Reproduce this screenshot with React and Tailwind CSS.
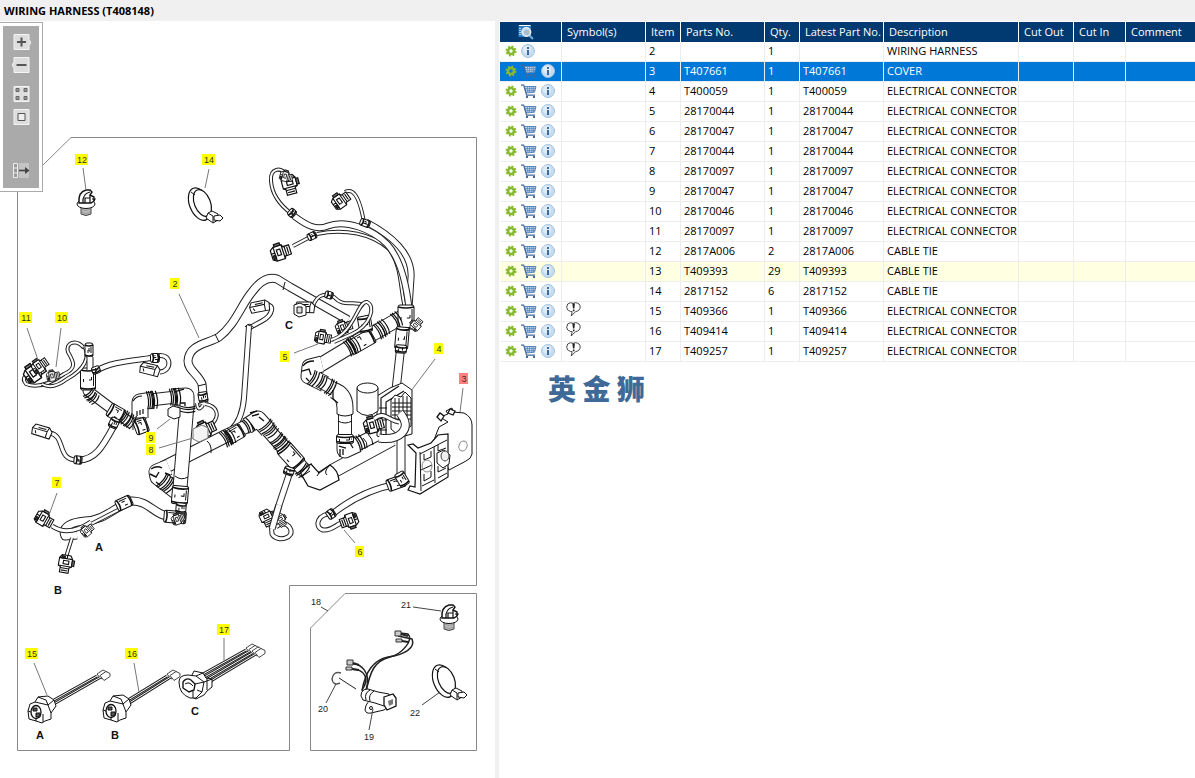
import { useState } from 'react';
import clsx from 'clsx';

const EC = 'ELECTRICAL CONNECTOR';

const parts = [
  { item: 2, partNo: '', qty: 1, description: 'WIRING HARNESS' },
  { item: 3, partNo: 'T407661', qty: 1, description: 'COVER' },
  { item: 4, partNo: 'T400059', qty: 1, description: EC },
  { item: 5, partNo: '28170044', qty: 1, description: EC },
  { item: 6, partNo: '28170047', qty: 1, description: EC },
  { item: 7, partNo: '28170044', qty: 1, description: EC },
  { item: 8, partNo: '28170097', qty: 1, description: EC },
  { item: 9, partNo: '28170047', qty: 1, description: EC },
  { item: 10, partNo: '28170046', qty: 1, description: EC },
  { item: 11, partNo: '28170097', qty: 1, description: EC },
  { item: 12, partNo: '2817A006', qty: 2, description: 'CABLE TIE' },
  { item: 13, partNo: 'T409393', qty: 29, description: 'CABLE TIE', highlight: true },
  { item: 14, partNo: '2817152', qty: 6, description: 'CABLE TIE' },
  { item: 15, partNo: 'T409366', qty: 1, description: EC, note: true },
  { item: 16, partNo: 'T409414', qty: 1, description: EC, note: true },
  { item: 17, partNo: 'T409257', qty: 1, description: EC, note: true },
];

const columns = [
  { label: 'Symbol(s)', width: 'w-[84px]' },
  { label: 'Item', width: 'w-[35px]' },
  { label: 'Parts No.', width: 'w-[84px]' },
  { label: 'Qty.', width: 'w-[35px]' },
  { label: 'Latest Part No.', width: 'w-[84px]' },
  { label: 'Description', width: 'w-[135px]' },
  { label: 'Cut Out', width: 'w-[55px]' },
  { label: 'Cut In', width: 'w-[52px]' },
  { label: 'Comment', width: '' },
];

// x, y is the centre of the label, line is the leader
const callouts = [
  { n: 12, x: 82, y: 160, line: 'M83 168 L86 190' },
  { n: 14, x: 209, y: 160, line: 'M209 169 L205 188' },
  { n: 2, x: 175, y: 284, line: 'M179 294 L199 338' },
  { n: 11, x: 26, y: 318, line: 'M27 328 L38 360' },
  { n: 10, x: 62, y: 318, line: 'M61 328 L56 367' },
  { n: 5, x: 285, y: 357, line: 'M294 353 L318 344' },
  { n: 4, x: 439, y: 349, line: 'M435 359 L411 391' },
  { n: 3, x: 464, y: 379, line: 'M463 388 L460 412' },
  { n: 9, x: 151, y: 438, line: 'M157 429 L170 419' },
  { n: 8, x: 151, y: 450, line: 'M159 448 L193 438' },
  { n: 7, x: 57, y: 483, line: 'M57 493 L49 515' },
  { n: 6, x: 360, y: 552, line: 'M355 543 L344 530' },
  { n: 15, x: 32, y: 654, line: 'M34 663 L47 695' },
  { n: 16, x: 132, y: 654, line: 'M134 663 L139 692' },
  { n: 17, x: 224, y: 630, line: 'M224 638 V662' },
];

const kitLabels = [
  { n: 18, x: 316, y: 602, line: 'M321 607 L328 611' },
  { n: 21, x: 406, y: 605, line: 'M413 607 L441 611' },
  { n: 20, x: 323, y: 709, line: 'M326 703 L336 684' },
  { n: 19, x: 369, y: 737, line: 'M369 730 L373 709' },
  { n: 22, x: 415, y: 713, line: 'M422 705 L440 692' },
];

function GearIcon() {
  return (
    <svg viewBox="0 0 12 12" className="size-3">
      <circle cx="6" cy="6" r="4.6" fill="none" stroke="#86b92f" strokeWidth="1.8" strokeDasharray="1.9 1.7" />
      <circle cx="6" cy="6" r="3" fill="none" stroke="#86b92f" strokeWidth="2.6" />
    </svg>
  );
}

function CartIcon() {
  return (
    <svg viewBox="0 0 16 15" className="h-[15px] w-4" fill="none" stroke="#5a86b8">
      <path d="M3.4 2.5H15L13.5 8.2L5 9Z" fill="#c9dbee" />
      <path d="M4 4.6H14.5M4.5 6.7H14M6.3 2.5L7 8.8M8.6 2.5V8.6M10.9 2.5V8.5M13 2.5L12.3 8.4" strokeWidth=".8" />
      <path d="M0 1.2H2.7L5.6 11.2H14" stroke="#42699c" strokeWidth="1.2" />
      <path d="M5 12H7V14H5ZM12 12H14V14H12Z" fill="#42699c" stroke="none" />
    </svg>
  );
}

function InfoIcon() {
  return (
    <svg viewBox="0 0 14 14" className="size-3.5">
      <circle cx="7" cy="7" r="6.5" fill="#c6dcf0" stroke="#a3c3e0" />
      <circle cx="6" cy="5.500" r="4" fill="#dfecf8" />
      <path d="M6 3H8V5H6ZM6 6H8V11H6Z" fill="#3f6a9e" />
    </svg>
  );
}

function NoteIcon() {
  return (
    <svg viewBox="0 0 15 15" className="ml-px h-[15px] w-[15px]">
      <path d="M4.5 9.5Q.7 8.5.7 5.2Q.8 1 4.5.7L7 1.4L9.500.7Q14.2 1.2 14.2 5Q14 9 9.6 9.6L5.2 14L6.2 9.6Z" fill="#fff" stroke="#333" strokeWidth=".9" />
      <path d="M6.300 1.500H8.900L8.4 6.6H7ZM6.900 7.600H8.500V9.200H6.900Z" fill="#222" />
    </svg>
  );
}

function SearchListIcon() {
  return (
    <svg viewBox="0 0 16 16" className="size-4">
      <path d="M.5 1H13V13H.5Z" fill="#2d7fc4" />
      <path d="M1 1.5H12.5" stroke="#fff" />
      <path d="M1 4.5H3M1 6.5H3M1 8.5H3M1 10.5H3" stroke="#a8d4f5" />
      <path d="M11.5 11.5L15 15" stroke="#6fa9d8" strokeWidth="2.2" />
      <circle cx="8.3" cy="8" r="4.4" fill="#c6dbe8" stroke="#e8eef2" strokeWidth="1.4" />
      <circle cx="8.8" cy="8.4" r="2.6" fill="#a4bccb" />
    </svg>
  );
}

function ToolButton({ label, children, className }) {
  return (
    <button type="button" aria-label={label} className={clsx('block h-[17px] w-[19px]', className)}>
      <svg viewBox="0 0 19 17" className="h-[17px] w-[19px]">
        {children}
      </svg>
    </button>
  );
}

function Toolbar() {
  return (
    <div className="absolute top-[1px] left-0 border border-l-0 border-[#aaa] bg-white p-[3px]">
      <div className="flex h-[162px] w-9 flex-col items-center bg-[#aaa] pt-2">
        <ToolButton label="Zoom in">
          <path d="M2 .5H17V5.5L19 8.5L17 11.5V15.5H2Z" fill="#ddd" stroke="#f4f4f4" />
          <path d="M5 8H14M9.5 3.5V12.5" stroke="#555" strokeWidth="2" />
        </ToolButton>
        <ToolButton label="Zoom out" className="mt-1.5">
          <path d="M2 .5H17V15.5H2V11L0 8L2 5Z" fill="#ddd" stroke="#f4f4f4" />
          <path d="M4.5 8H14.5" stroke="#555" strokeWidth="2" />
        </ToolButton>
        <ToolButton label="Fit to window" className="mt-3">
          <path d="M2 .5H17V15.5H2Z" fill="#ddd" stroke="#f4f4f4" />
          <path d="M4 2.5H7V5.5H4ZM12 2.5H15V5.5H12ZM4 10.5H7V13.5H4ZM12 10.5H15V13.5H12Z" fill="#999" stroke="#666" />
        </ToolButton>
        <ToolButton label="Actual size" className="mt-1.5">
          <path d="M2 .5H17V15.5H2Z" fill="#ddd" stroke="#f4f4f4" />
          <path d="M6 4.5H13V11.5H6Z" fill="#eee" stroke="#555" />
        </ToolButton>
        <ToolButton label="Show part list" className="mt-9">
          <path d="M1.5 1.5H5.5V15.5H1.5ZM1.5 6H5.5M1.5 11H5.5" fill="#999" stroke="#eee" />
          <path d="M7 1H17V16H7Z" fill="#c4c4c4" />
          <path d="M7 8.5H15" stroke="#444" strokeWidth="1.6" />
          <path d="M13 5L17.5 8.5L13 12Z" fill="#444" />
        </ToolButton>
      </div>
    </div>
  );
}

function Tube({ d, w }) {
  return (
    <g fill="none" strokeLinejoin="round">
      <path d={d} stroke="#222" strokeWidth={w} />
      <path d={d} stroke="#fff" strokeWidth={w - 2} />
    </g>
  );
}

// ribbed sleeve that sits across a tube, a is the direction of the tube
function Joint({ x, y, a = 0, w = 16, l = 14 }) {
  const h = w / 2;
  const k = l / 2;
  return (
    <g transform={`translate(${x} ${y}) rotate(${a})`} fill="#fff" stroke="#111">
      <rect x={-k} y={-h} width={l} height={w} rx="2" />
      <path d={`M${-k + 2} ${-h}Q${-k + 4} 0 ${-k + 2} ${h}M${k - 2} ${-h}Q${k} 0 ${k - 2} ${h}`} fill="none" strokeWidth="1.6" />
      <path d={`M${-k + 4} ${-h + 2}H${k - 4}M-2 ${-h + 4}L1 ${-h + 4}V-1M0 ${h - 3}H3`} fill="none" />
    </g>
  );
}

function Band({ x, y, a = 0, w = 14 }) {
  return (
    <g transform={`translate(${x} ${y}) rotate(${a})`} fill="none" stroke="#111">
      <path d={`M-2 ${-w / 2}Q1 0 -2 ${w / 2}M0 ${-w / 2}Q3 0 0 ${w / 2}M3 ${-w / 2}Q6 0 3 ${w / 2}`} strokeWidth="1.2" />
    </g>
  );
}

function Plug({ x, y, a = 0, s = 1 }) {
  return (
    <g transform={`translate(${x} ${y}) rotate(${a}) scale(${s})`} fill="#fff" stroke="#111">
      <path d="M-9 -4L-6 -6H1L2 -4H7V4H2L1 6H-6L-9 4Z" />
      <path d="M-6 -6V6M1 -6V6M-9 -1H-6M-4 -3H-1V2H-4ZM3 -4V4M5 -3V3" fill="none" />
      <path d="M-5 -8H0V-6H-5Z" fill="#777" />
      <path d="M-8 1H-6V4H-8Z" fill="#333" />
    </g>
  );
}

function BoxPlug({ x, y, a = 0 }) {
  return (
    <g transform={`translate(${x} ${y}) rotate(${a})`} fill="#fff" stroke="#111">
      <path d="M-10 -3L-7 -7L7 -5L10 -1L8 6L-10 3Z" />
      <path d="M-10 -3L5 -1L7 -5M5 -1L4 5M-4 -4L4 -3M-7 -1L-6 2" fill="none" />
    </g>
  );
}

function FirTreeTie({ x, y }) {
  return (
    <g transform={`translate(${x} ${y})`} fill="#fff" stroke="#111">
      <path d="M-5 8V16Q0 19 5 16V8Z" fill="#bbb" stroke="#444" />
      <path d="M-5 11Q0 14 5 11M-5 14Q0 17 5 14" fill="none" stroke="#888" strokeWidth=".7" />
      <ellipse cx="0" cy="6" rx="9" ry="4.5" />
      <path d="M-7 5Q-8 -6 0 -8H4L6 -6L4 -3L8 -1V3L5 5Z" strokeWidth="1.4" />
      <path d="M-3 5Q-4 -4 4 -6M-1 5V0H4V5M4 -3V0M6 1H9L8 3" fill="none" strokeWidth="1.2" />
    </g>
  );
}

function CableTie({ x, y }) {
  return (
    <g transform={`translate(${x} ${y})`} fill="none" stroke="#111">
      <ellipse cx="0" cy="-1" rx="10" ry="17" transform="rotate(-22)" fill="#fff" strokeWidth="1.2" />
      <ellipse cx="3" cy="-1" rx="8" ry="14" transform="rotate(-22)" fill="#fff" strokeWidth="1.2" />
      <path d="M-9 -13L-5 -10" />
      <path d="M8 8L12 6L18 9V15L13 18L6 13Z" fill="#fff" />
      <path d="M14 11L20 10L23 13L20 16L14 15ZM8 8L13 11V18" fill="#fff" />
    </g>
  );
}

function LeadConnector({ x, y, s = 1 }) {
  return (
    <g transform={`translate(${x} ${y}) scale(${s})`} fill="#fff" stroke="#111">
      <path d="M-12 0L-10 -7L-5 -9L-2 -14L8 -15L14 -11L16 -5L11 2V8L5 10L2 12L-4 10L-11 8Z" />
      <path d="M-5 -9L8 -6L11 2M8 -6L14 -11M-2 -14L6 -11L8 -6M-12 0L-4 3L-4 10M3 3V11" fill="none" />
      <ellipse cx="-4" cy="1" rx="5" ry="6.5" strokeWidth="1.3" />
      <path d="M-7 -3H-3V0H-7ZM-4 2H0V6H-4Z" fill="#555" />
    </g>
  );
}

// three-way housing C has one wide opening instead of pin slots
function WideConnector({ x, y }) {
  return (
    <g transform={`translate(${x} ${y})`} fill="#fff" stroke="#111">
      <path d="M-2 -11L0 -15L9 -13L12 -8L18 -7V1L13 5L10 9L2 13L-6 9L-4 -6Z" />
      <path d="M-15 -4Q-15 -11 -6 -11L2 -10L10 -4L8 6L2 12L-4 12Q-15 8 -15 -4Z" />
      <path d="M-11 -4Q-8 -9 -3 -6L1 -2L0 4L-5 6L-11 2Z" strokeWidth="1.4" />
      <path d="M-9 -2Q-5 -5 -1 0M2 -10L9 -13M10 -4L18 -7M1 -2L10 -4M-1 5V12M3 4L8 6M13 -8V4" fill="none" />
    </g>
  );
}

function Leads({ x1, y1, x2, y2, count }) {
  return Array.from({ length: count }, (_, i) => {
    const o = i * 3;
    return (
      <g key={i}>
        <Tube d={`M${x1 + o / 2} ${y1 + o} L${x2 + o} ${y2 + o / 2}`} w={3} />
        <path d={`M${x2 + o} ${y2 + o / 2 - 2}l6 -4l4 2l0 3l-6 4z`} fill="#fff" stroke="#333" strokeWidth=".9" />
      </g>
    );
  });
}

function Harness() {
  return (
    <g>
      {/* upper right branches */}
      <Tube w={4} d="M287 176 C281 166 270 168 271 181 C272 196 281 206 292 214" />
      <Tube w={4} d="M345 192 C356 186 361 206 364 222" />
      <Tube w={4} d="M293 246 L312 236" />
      <Tube w={4} d="M317 234 C345 228 372 234 389 249 C402 266 400 288 405 308" />
      <Tube w={7} d="M366 222 C391 235 413 254 411 278 L409 308" />
      <Tube w={7} d="M294 216 C306 225 316 231 328 226 C345 219 372 229 387 244 C400 258 406 282 409 308" />
      <Joint x={292} y={213} a={40} w={8} l={7} />
      <Joint x={365} y={223} a={20} w={7} l={10} />
      <Joint x={312} y={236} a={-25} w={7} l={9} />
      <Plug x={290} y={186} a={75} s={1.2} />
      <Plug x={287} y={177} a={15} s={0.8} />
      <Plug x={342} y={200} a={-35} s={1.1} />
      <Plug x={282} y={252} a={-18} s={1.2} />

      {/* main cable, item 2 */}
      <Tube w={9} d="M204 404 L202 384 C198 374 188 370 188 361 C189 344 208 344 219 337 C235 325 241 305 252 292 C260 281 268 276 277 279 L290 287 L348 320" />
      <path d="M215 334L219 342M285 282L283 290M198 386L206 384" stroke="#111" />
      <Joint x={203} y={397} a={80} w={9} l={10} />
      <Tube w={5} d="M266 305 C275 304 273 315 262 321 L249 328" />
      <Tube w={6} d="M249 326 L244 398 Q242 420 231 430" />
      <path d="M245 327Q249 321 254 328" fill="none" stroke="#111" />
      <BoxPlug x={260} y={307} a={-20} />
      <Tube w={4} d="M313 306 C318 292 327 294 334 297 C344 308 352 300 364 305" />
      <BoxPlug x={305} y={308} a={-8} />
      <path d="M294 305L300 303L306 306V315L299 317L294 314Z" fill="#fff" stroke="#111" />
      <path d="M297 307H302V313H297Z" fill="#ddd" stroke="#111" />
      <Joint x={329} y={295} a={15} w={7} l={8} />

      {/* right trunk */}
      <Tube w={9} d="M401 345 L396 390 M401 430 V478" />
      <Tube w={15} d="M404 316 L355 344 L312 370" />
      <Tube w={17} d="M322 364 L310 367 L309 376 L325 384" />
      <Tube w={14} d="M322 382 L339 392 Q346 398 345 412 V446" />
      <Tube w={17} d="M333 390 Q345 394 345 408 V414" />
      <path d="M303 366Q306 361 314 361M302 371L309 369L311 375M333 390V399L338 403M306 378L309 381" fill="none" stroke="#111" strokeWidth="1.3" />
      <Band x={313} y={378} a={30} w={16} />
      <Band x={321} y={382} a={30} />
      <Band x={330} y={387} a={30} w={17} />
      <path d="M337 414Q345 418 353 414M338 421Q345 425 352 421" fill="none" stroke="#111" />
      <Joint x={361} y={341} a={-30} w={17} l={26} />
      <Joint x={365} y={324} a={80} w={13} l={16} />
      <Band x={383} y={328} a={-30} w={17} />
      <Band x={379} y={331} a={-30} w={17} />
      <Band x={354} y={345} a={-30} w={17} />
      <Band x={349} y={348} a={-30} w={17} />
      <Joint x={406} y={317} a={90} w={16} l={24} />
      <Band x={396} y={320} a={-30} w={16} />
      <Joint x={402} y={338} a={95} w={13} l={22} />
      <Joint x={401} y={349} a={95} w={11} l={8} />
      <Plug x={417} y={324} a={-50} s={0.8} />
      <Plug x={345} y={327} a={-20} />
      <Plug x={324} y={338} a={10} />
      <Tube w={4} d="M331 340 C354 334 358 300 367 302 C376 306 371 325 352 334 L334 342" />

      {/* lower trunk */}
      <Tube w={15} d="M392 439 L335 470 L318 481 L302 468 L286 450 L260 421" />
      <Tube w={14} d="M350 448 L380 433" />
      <Tube w={17} d="M345 438 V450 L358 444" />
      <path d="M340 449V457M343 449V455M350 443L353 448M339 446L346 448" stroke="#111" strokeWidth="1.3" />
      <Joint x={345} y={439} a={90} w={17} l={9} />
      <Band x={359} y={443} a={-25} w={16} />
      <path d="M363 438Q368 442 367 448M303 471Q309 464 312 464M368 434Q373 439 373 445" fill="none" stroke="#111" />
      <path d="M300 472L311 464L319 473L330 465Q338 470 339 480L320 490L308 486Z" fill="#fff" stroke="#111" strokeWidth="1.3" />
      <path d="M319 473L317 476M330 465Q323 472 327 475M301 477L310 471" fill="none" stroke="#111" />
      <Joint x={291} y={456} a={48} w={17} l={24} />
      <Band x={302} y={470} a={45} w={16} />
      <Band x={281} y={444} a={48} w={17} />
      <Band x={277} y={439} a={48} w={16} />
      <Band x={271} y={431} a={48} w={15} />
      <Tube w={14} d="M258 421 L226 436 L163 468" />
      <Tube w={17} d="M247 426 L258 419 L268 430" />
      <path d="M250 413L257 411M252 416L259 414M259 417L264 421M251 424L255 430" fill="none" stroke="#111" strokeWidth="1.400" />
      <Band x={266} y={426} a={48} w={17} />
      <Band x={247} y={426} a={-30} w={15} />
      <Joint x={235} y={434} a={-30} w={14} l={17} />
      <Band x={229} y={437} a={-30} w={17} />
      <Band x={225} y={439} a={-30} w={17} />
      <path d="M207 441Q212 445 211 453" fill="none" stroke="#111" />
      <Tube w={17} d="M169 467 L157 472 L158 477 L180 494" />
      <path d="M151 469Q157 465 162 468M150 474L156 477L159 472M156 482L160 485M165 473L170 475" fill="none" stroke="#111" strokeWidth="1.400" />
      <Band x={163} y={481} a={40} w={17} />
      <Band x={169} y={485} a={40} w={17} />
      <Tube w={7} d="M290 472 L272 526" />
      <Tube w={5} d="M271 522 L272 534 C277 543 296 538 290 528 C286 521 279 524 276 527" />
      <Joint x={289} y={471} a={110} w={10} l={8} />
      <Plug x={267} y={519} a={65} />
      <Plug x={281} y={521} a={60} s={0.8} />
      <Tube w={7} d="M279 505 L272 529" />

      {/* lower right branch, item 6 */}
      <Tube w={7} d="M398 484 C373 488 352 498 331 515" />
      <Tube w={5} d="M334 514 C318 512 313 527 323 530 C331 531 336 525 341 523" />
      <Joint x={331} y={514} a={-35} w={9} l={8} />
      <Joint x={396} y={483} a={-20} w={12} l={18} />
      <Joint x={402} y={479} a={60} w={10} l={14} />
      <Plug x={348} y={521} a={160} s={1.1} />

      {/* item 4 with filter can */}
      <path d="M377 396L390 388L402 383L412 390V434L390 440L377 436Z" fill="#fff" stroke="#111" />
      <path d="M381 437V398L399 386M386 437V402L404 391M379 408H387M379 420H387M379 430H387" fill="none" stroke="#111" strokeWidth="1.2" />
      <path d="M391 400L395 395L401 397L405 392L411 398V426L398 435L391 429Z" fill="#fff" stroke="#111" />
      <path d="M392 403H411M392 407H411M392 411H411M392 415H411M392 419H411M395 398V421M399 398V421M403 396V421M407 396V421" stroke="#111" />
      <path d="M357 388V411Q367 420 378 411V388" fill="#fff" stroke="#111" />
      <ellipse cx="367.5" cy="388" rx="10.5" ry="5" fill="#fff" stroke="#111" />
      <Plug x={375} y={425} a={-15} s={1.2} />
      <Tube w={5} d="M374 419 C384 410 389 421 399 422" />
      <Tube w={9} d="M400 413 C414 430 398 441 379 438" />

      {/* cover, item 3 */}
      <path d="M439 427L448 422L440 417L448 414L446 411L452 408L453 412L464 413Q472 417 472 425V454Q471 459 466 461L449 470L434 440Z" fill="#fff" stroke="#111" />
      <path d="M437 417L440 413L444 416L441 421ZM448 413L450 409L455 411L453 415Z" fill="#fff" stroke="#111" strokeWidth="1.3" />
      <ellipse cx="463" cy="446" rx="4" ry="5" fill="#fff" stroke="#888" transform="rotate(20 463 446)" />
      <path d="M408 445L413 444L418 448L431 443L438 435L448 434V477L420 494L408 490L410 486L415 487L416 453Z" fill="#fff" stroke="#111" strokeWidth="1.2" />
      <path d="M420 452L421 491M420 454L447 440M421 470L432 465M422 486L434 480M434 447L435 483M438 478L447 473M424 454V460L431 457V451M438 445V451L446 448M424 474V481L431 477V471M438 466V472L446 468" fill="none" stroke="#111" />
      <path d="M437 453L444 450L450 455L449 464L443 468L437 463Z" fill="#fff" stroke="#111" />
      <ellipse cx="445" cy="456" rx="4" ry="5" fill="#eee" stroke="#444" />
      <ellipse cx="427" cy="466" rx="5" ry="6" fill="none" stroke="#888" />

      {/* left trunk */}
      <Tube w={4} d="M205 404 C218 406 220 416 212 424 M203 405 Q198 413 197 403" />
      <Tube w={15} d="M187 404 L180 488" />
      <path d="M175 476Q181 481 188 477" fill="none" stroke="#111" />
      <Plug x={207} y={429} a={-25} s={1.2} />
      <path d="M193 429L202 425L208 428V438L199 442L193 439Z" fill="#f4f4f4" stroke="#777" />
      <Tube w={13} d="M176 397 L150 400 L139 404 V430" />
      <Tube w={11} d="M88 374 V391 L132 424" />
      <Tube w={17} d="M153 400 L140 402 V418" />
      <path d="M137 411V416M140 410V415M143 409V414M132 418H147M133 401Q136 396 142 396" fill="none" stroke="#111" strokeWidth="1.2" />
      <Band x={153} y={400} a={-5} w={18} />
      <Band x={149} y={400} a={-5} w={18} />
      <Tube w={17} d="M172 397 L186 396 V410" />
      <path d="M180 403H185V406M177 391L184 389" fill="none" stroke="#111" strokeWidth="1.3" />
      <Band x={176} y={397} a={-5} w={18} />
      <Band x={172} y={397} a={-5} w={17} />
      <Band x={187} y={408} a={93} w={17} />
      <Joint x={141} y={426} a={-20} w={15} l={13} />
      <Band x={130} y={421} a={30} w={15} />
      <Joint x={116} y={413} a={30} w={14} l={16} />
      <Band x={125} y={418} a={35} w={15} />
      <Joint x={88} y={379} a={90} w={15} l={22} />
      <Band x={89} y={394} a={50} w={12} />
      <Band x={93} y={398} a={40} w={12} />
      <Tube w={4} d="M84 348 C76 338 65 343 68 352 C73 361 78 368 64 374 C50 384 36 388 26 384 C20 377 28 373 35 370" />
      <Tube w={4} d="M84 346 C91 357 84 370 67 379 C58 386 49 388 42 384" />
      <Joint x={89} y={350} a={90} w={8} l={14} />
      <Tube w={7} d="M90 357 V370" />
      <Plug x={36} y={372} a={-35} s={1.3} />
      <Plug x={41} y={365} a={-35} />
      <Plug x={54} y={376} a={-10} s={0.8} />
      <Tube w={6} d="M96 371 C110 362 130 361 151 358" />
      <Tube w={5} d="M156 356 C172 352 173 371 160 372" />
      <Joint x={155} y={358} a={0} w={9} l={9} />
      <Joint x={96} y={370} a={70} w={8} l={7} />
      <BoxPlug x={150} y={370} a={5} />
      <Tube w={7} d="M115 424 C104 444 96 461 77 460" />
      <Tube w={5} d="M80 460 C55 462 67 436 50 433" />
      <Joint x={78} y={460} a={5} w={8} l={8} />
      <Joint x={114} y={423} a={115} w={9} l={10} />
      <BoxPlug x={42} y={432} a={8} />
      <path d="M168 409L173 406L180 408V417L174 419L168 416Z" fill="#fff" stroke="#111" />

      {/* lower left branch, item 7 */}
      <Tube w={9} d="M172 517 C154 516 149 500 131 501 C113 508 105 520 85 521 C73 522 61 526 65 536 L77 535" />
      <Tube w={4} d="M120 509 L89 525 M72 538 L66 557" />
      <Tube w={5} d="M52 526 C65 535 79 530 91 522" />
      <Joint x={124} y={503} a={-25} w={11} l={16} />
      <Joint x={180} y={495} a={95} w={16} l={18} />
      <Joint x={175} y={517} a={5} w={12} l={22} />
      <Joint x={181} y={508} a={95} w={10} l={10} />
      <Plug x={179} y={519} a={-20} s={0.8} />
      <Plug x={45} y={520} a={30} s={1.1} />
      <Plug x={88} y={530} a={-40} s={0.8} />
      <Plug x={65} y={565} a={100} s={1.1} />
    </g>
  );
}

function SensorKit() {
  return (
    <g>
      <g fill="none" stroke="#222" strokeWidth="1.5">
        <path d="M362 691 C365 672 374 660 388 657 C404 655 416 648 412 639 L398 636" />
        <path d="M366 692 C370 672 374 661 390 657 C402 654 414 640 408 634 L400 633" />
        <path d="M362 690 C369 680 367 669 350 669 M366 690 C372 672 360 663 352 664" />
      </g>
      <path d="M395 631H401V636H395ZM396 639H402V642H396ZM347 660H353V665H347ZM346 667H352V670H346Z" fill="#ccc" stroke="#333" />
      <path d="M401 634L408 636M402 641L408 642M353 663L359 665M352 669L359 670" stroke="#222" strokeWidth="2" />
      <path d="M341 673Q333 671 332 679Q333 686 340 683" fill="none" stroke="#555" strokeWidth="1.5" />
      <path d="M339 678L356 689" stroke="#222" />
      <path d="M365 710Q366 701 373 699L383 697L392 704L384 710L371 713Q366 714 365 710Z" fill="#fff" stroke="#111" />
      <path d="M361 696Q361 689 368 689L378 692L389 694L391 700L384 706L375 703L363 700Z" fill="#fff" stroke="#111" />
      <path d="M366 700Q364 693 370 690M370 701Q368 695 374 691" fill="none" stroke="#111" />
      <path d="M384 697L393 694L396 698V706L387 710L384 705Z" fill="#fff" stroke="#111" strokeWidth="1.3" />
      <path d="M388 701L393 699V704L389 706Z" fill="#777" />
      <circle cx="371" cy="708" r="1.5" fill="#fff" stroke="#111" />
      <FirTreeTie x={449} y={613} />
      <CableTie x={444} y={682} />
    </g>
  );
}

function Diagram({ selected, onSelect }) {
  return (
    <svg viewBox="0 21 495 757" className="block w-full font-['Liberation_Sans',sans-serif]" role="img" aria-label="Wiring harness diagram">
      <path d="M42 166L71 137.5H476.5V585.5H289.5V750.5H17.5V190" fill="none" stroke="#888" />
      <path d="M310.5 628L345 593.5H476.5V750.5H310.5Z" fill="none" stroke="#888" />
      <FirTreeTie x={86} y={198} />
      <CableTie x={200} y={205} />
      <Harness />
      <SensorKit />
      <Leads x1={54} y1={700} x2={97} y2={676} count={2} />
      <Leads x1={128} y1={700} x2={167} y2={676} count={2} />
      <Leads x1={203} y1={674} x2={246} y2={650} count={4} />
      <LeadConnector x={40} y={711} />
      <LeadConnector x={115} y={710} />
      <WideConnector x={194} y={686} />
      {callouts.map((c) => (
        <g key={c.n} onClick={() => onSelect(c.n)}>
          <path d={c.line} stroke="#777" />
          <rect x={c.n > 9 ? c.x - 7 : c.x - 5} y={c.y - 6} width={c.n > 9 ? 13 : 9} height="11" fill={c.n === selected ? '#ff8080' : '#ffff00'} />
          <text x={c.x} y={c.y + 3} textAnchor="middle" fontSize="9" fill="#333">{c.n}</text>
        </g>
      ))}
      {kitLabels.map((c) => (
        <g key={c.n}>
          <path d={c.line} stroke="#444" />
          <text x={c.x} y={c.y + 3} textAnchor="middle" fontSize="9" fill="#222">{c.n}</text>
        </g>
      ))}
      <g fontSize="11" fontWeight="700" textAnchor="middle" fill="#111">
        <text x="289" y="329">C</text>
        <text x="99" y="551">A</text>
        <text x="58" y="594">B</text>
        <text x="40" y="739">A</text>
        <text x="115" y="739">B</text>
        <text x="195" y="715">C</text>
      </g>
    </svg>
  );
}

function PartsTable({ selected, onSelect }) {
  return (
    <table className="w-full table-fixed border-separate border-spacing-0 text-[11px] leading-[18px]">
      <thead>
        <tr className="h-5 bg-[#003a70] text-left text-white">
          <th className="w-[62px] border-r border-white p-0" aria-label="Actions">
            <span className="flex justify-center pr-2.5">
              <SearchListIcon />
            </span>
          </th>
          {columns.map((c) => (
            <th key={c.label} className={clsx('border-r border-white py-0 pr-0 pl-[5px] font-normal whitespace-nowrap last:border-r-0', c.width)}>
              {c.label}
            </th>
          ))}
        </tr>
      </thead>
      <tbody>
        {parts.map((p) => {
          const active = p.item === selected;
          const cell = 'border-r border-b border-[#ededed] py-0 pr-0 pl-[3px] align-top whitespace-nowrap last:border-r-0';
          return (
            <tr
              key={p.item}
              onClick={() => onSelect(p.item)}
              className={clsx('h-5', active && 'bg-[#0078d7] text-white', p.highlight && !active && 'bg-[#ffffe1]')}
            >
              <td className={cell}>
                <div className="flex h-[18px] items-center gap-1 pl-0.5">
                  <button type="button" aria-label="Options"><GearIcon /></button>
                  {p.partNo && <button type="button" aria-label="Add to cart"><CartIcon /></button>}
                  <button type="button" aria-label="Information"><InfoIcon /></button>
                </div>
              </td>
              <td className={cell}>{p.note && <NoteIcon />}</td>
              <td className={cell}>{p.item}</td>
              <td className={cell}>{p.partNo}</td>
              <td className={cell}>{p.qty}</td>
              <td className={cell}>{p.partNo}</td>
              <td className={cell}>{p.description}</td>
              <td className={cell}></td>
              <td className={cell}></td>
              <td className={cell}></td>
            </tr>
          );
        })}
      </tbody>
    </table>
  );
}

export default function App() {
  const [selected, setSelected] = useState(3);

  return (
    <div className="flex min-h-screen flex-col bg-white font-['Open_Sans','Noto_Sans',sans-serif] text-black">
      <header className="h-[21px] bg-[#f0f0f0] pl-1">
        <h1 className="text-[11px] leading-[22px] font-bold">WIRING HARNESS (T408148)</h1>
      </header>
      <main className="flex grow">
        <section className="relative w-[495px] shrink-0">
          <Diagram selected={selected} onSelect={setSelected} />
          <Toolbar />
        </section>
        <div className="w-1 shrink-0 bg-[#f0f0f0]" />
        <section className="min-w-0 grow pt-px pl-px">
          <PartsTable selected={selected} onSelect={setSelected} />
          <p className="mt-1.5 ml-12 font-['Noto_Sans_CJK_SC',sans-serif] text-[28px] leading-10 font-black text-[#3f6a98]">英 金 狮</p>
        </section>
      </main>
    </div>
  );
}
